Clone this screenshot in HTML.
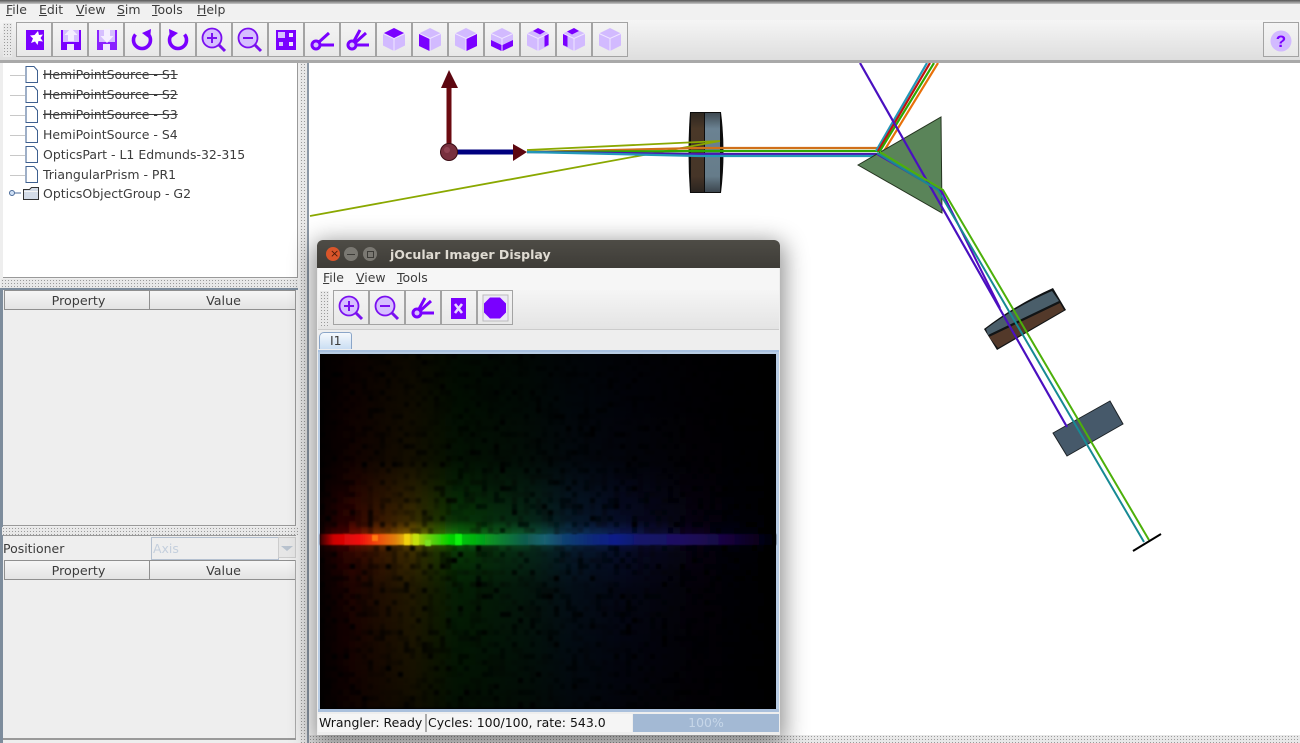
<!DOCTYPE html>
<html><head><meta charset="utf-8"><style>
html,body{margin:0;padding:0;background:#eee}
body{width:1300px;height:743px;overflow:hidden;position:relative;font-family:"DejaVu Sans",sans-serif;font-size:12.48px;color:#3c3c3c}
.a{position:absolute}
.t{position:absolute;white-space:nowrap;line-height:16px}
u{text-decoration:underline}
.btn{position:absolute;width:34px;height:33px;border:1px solid #a3a3a3;background:linear-gradient(#f4f4f4,#e8e8e8)}
.btn svg{position:absolute;left:0;top:0}
.dots{background-color:#e8e8e8;background-image:radial-gradient(#9a9a9a 0.55px,transparent 0.75px);background-size:3px 3px}
.hd{position:absolute;height:18px;border:1px solid #8f8f8f;background:linear-gradient(#f6f6f6,#e4e4e4);text-align:center;line-height:20px;box-sizing:content-box;font-size:12.7px}
.ln{position:absolute;left:10px;width:15px;height:1px;background:#c8c8c8}
.row{position:absolute;left:43px;white-space:nowrap;line-height:16px}
.s{text-decoration:line-through}
</style></head><body>
<svg width="0" height="0" style="position:absolute">
<defs>
<symbol id="zin" viewBox="0 0 34 33"><circle cx="15" cy="15" r="9.5" fill="#d6bfff" stroke="#7a10f0" stroke-width="1.8"/><path d="M22 22l6 6" stroke="#7a10f0" stroke-width="3"/><path d="M10 15h10M15 10v10" stroke="#7a10f0" stroke-width="2"/></symbol>
<symbol id="zout" viewBox="0 0 34 33"><circle cx="15" cy="15" r="9.5" fill="#d6bfff" stroke="#7a10f0" stroke-width="1.8"/><path d="M22 22l6 6" stroke="#7a10f0" stroke-width="3"/><path d="M10 15h10" stroke="#7a10f0" stroke-width="2"/></symbol>
<symbol id="fan" viewBox="0 0 34 33"><circle cx="11" cy="22" r="4" fill="#d6bfff" stroke="#7a00ff" stroke-width="3"/><path d="M14 19l10-9M15 22h14" stroke="#7a00ff" stroke-width="3" fill="none"/></symbol>
<symbol id="fan3" viewBox="0 0 34 33"><circle cx="11" cy="22" r="4" fill="#d6bfff" stroke="#7a00ff" stroke-width="3"/><path d="M13 18l6-11M15 19l10-9M15 22h13" stroke="#7a00ff" stroke-width="3" fill="none"/></symbol>
<symbol id="cube" viewBox="0 0 34 33"><path d="M17 5l11 5.500v12L17 28 6 22.500v-12z" fill="#d2baff"/><path d="M6 10.500l11 5 11-5M17 15.500V28" stroke="#efe6ff" stroke-width="1" fill="none"/></symbol>
</defs></svg>

<!-- top -->
<div class="a" style="left:0;top:0;width:1300px;height:4px;background:linear-gradient(#555,#c8c8c8)"></div>
<div class="a" style="left:0;top:4px;width:1300px;height:17px;background:#f1f1f1"></div>
<div class="t" style="left:6px;top:2px"><u>F</u>ile</div>
<div class="t" style="left:39px;top:2px"><u>E</u>dit</div>
<div class="t" style="left:76px;top:2px"><u>V</u>iew</div>
<div class="t" style="left:117px;top:2px"><u>S</u>im</div>
<div class="t" style="left:152px;top:2px"><u>T</u>ools</div>
<div class="t" style="left:197px;top:2px"><u>H</u>elp</div>
<div class="a" style="left:0;top:20px;width:1300px;height:40px;background:linear-gradient(#f5f5f5,#dedede)"></div>
<div class="a dots" style="left:3px;top:23px;width:9px;height:34px"></div>

<div class="btn" style="left:16px;top:22px"><svg width="34" height="33"><rect x="9" y="7" width="18" height="20" fill="#7a00ff"/><path d="M21 8l1 4 4-.5-2.500 3.500 2.500 3.500-4.500-.5-1 4-2.500-3.500-4 1.500 2-4.500-3-3 4.500-.5z" fill="#fff"/></svg></div>
<div class="btn" style="left:52px;top:22px"><svg width="34" height="33"><path d="M8 7h20v20H8z" fill="#7a00ff"/><rect x="10" y="7" width="16" height="12" fill="#d6bfff"/><rect x="14" y="21" width="7" height="6" fill="#efe6ff"/><path d="M18 5l6.500 7H21v6h-6v-6h-3.500z" fill="#f4eeff"/></svg></div>
<div class="btn" style="left:88px;top:22px"><svg width="34" height="33"><path d="M8 7h20v20H8z" fill="#8a20ff"/><rect x="10" y="7" width="16" height="12" fill="#d6bfff"/><rect x="14" y="21" width="7" height="6" fill="#efe6ff"/><path d="M18 20l6.500-7H21V6h-6v7h-3.500z" fill="#f4eeff"/></svg></div>
<div class="btn" style="left:124px;top:22px"><svg width="34" height="33"><path d="M10.500 11.500A8.500 8.500 0 1 0 23 11" fill="none" stroke="#7a00ff" stroke-width="3.600"/><path d="M17 10l9-4-1 10z" fill="#7a00ff"/></svg></div>
<div class="btn" style="left:160px;top:22px"><svg width="34" height="33"><path d="M23.500 11.500A8.500 8.500 0 1 1 11 11" fill="none" stroke="#7a00ff" stroke-width="3.600"/><path d="M17 10l-9-4 1 10z" fill="#7a00ff"/></svg></div>
<div class="btn" style="left:196px;top:22px"><svg width="34" height="33"><use href="#zin"/></svg></div>
<div class="btn" style="left:232px;top:22px"><svg width="34" height="33"><use href="#zout"/></svg></div>
<div class="btn" style="left:268px;top:22px"><svg width="34" height="33"><rect x="7" y="7" width="20" height="20" fill="#7a00ff"/><rect x="9" y="9" width="7" height="6" fill="#d6bfff"/><rect x="20" y="10" width="4" height="4" fill="#efe6ff"/><rect x="10" y="19" width="4" height="4" fill="#d6bfff"/><rect x="20" y="19" width="4" height="4" fill="#efe6ff"/></svg></div>
<div class="btn" style="left:304px;top:22px"><svg width="34" height="33"><use href="#fan"/></svg></div>
<div class="btn" style="left:340px;top:22px"><svg width="34" height="33"><use href="#fan3"/></svg></div>
<div class="btn" style="left:376px;top:22px"><svg width="34" height="33"><use href="#cube"/><path d="M17 5l10 5-10 5-10-5z" fill="#7a00ff"/></svg></div>
<div class="btn" style="left:412px;top:22px"><svg width="34" height="33"><use href="#cube"/><path d="M6 11l10.500 5v12L6 23z" fill="#7a00ff"/></svg></div>
<div class="btn" style="left:448px;top:22px"><svg width="34" height="33"><use href="#cube"/><path d="M28 11l-10.500 5v12L28 23z" fill="#7a00ff"/></svg></div>
<div class="btn" style="left:484px;top:22px"><svg width="34" height="33"><use href="#cube"/><path d="M6 17l10.500 5v6L6 23zM28 17l-10.500 5v6L28 23z" fill="#7a00ff"/></svg></div>
<div class="btn" style="left:520px;top:22px"><svg width="34" height="33"><use href="#cube"/><path d="M12 8l5-3 7 3.500-5 3zM23.500 13l4-2v11l-4 2z" fill="#7a00ff"/></svg></div>
<div class="btn" style="left:556px;top:22px"><svg width="34" height="33"><use href="#cube"/><path d="M22 8l-5-3-7 3.500 5 3zM6 11l4.500 2v11L6 22z" fill="#7a00ff"/></svg></div>
<div class="btn" style="left:592px;top:22px"><svg width="34" height="33"><use href="#cube"/></svg></div>
<div class="btn" style="left:1263px;top:22px"><svg width="34" height="33"><circle cx="17" cy="18" r="10.500" fill="#d2baff"/><text x="17" y="24" text-anchor="middle" font-family="Liberation Sans, sans-serif" font-weight="bold" font-size="17" fill="#7a00ff">?</text></svg></div>
<div class="a" style="left:0;top:60px;width:1300px;height:3px;background:#a9a9a9"></div>

<!-- left -->
<div class="a" style="left:0;top:288px;width:3px;height:455px;background:#7d8c9c"></div>
<div class="a" style="left:3px;top:63px;width:294px;height:214px;background:#fff;border-right:1px solid #999;border-bottom:1px solid #999"></div>
<div class="ln" style="top:75px"></div><div class="ln" style="top:95px"></div><div class="ln" style="top:115px"></div><div class="ln" style="top:135px"></div><div class="ln" style="top:155px"></div><div class="ln" style="top:175px"></div>
<svg class="a" style="left:0;top:63px" width="45" height="142">
<g fill="#fff" stroke="#3d5f8f" stroke-width="1"><path d="M26 3.500h8l3.500 4v12h-11.500z"/><path d="M26 23.500h8l3.500 4v12h-11.500z"/><path d="M26 43.500h8l3.500 4v12h-11.500z"/><path d="M26 63.500h8l3.500 4v12h-11.500z"/><path d="M26 83.500h8l3.500 4v12h-11.500z"/><path d="M26 103.500h8l3.500 4v12h-11.500z"/></g>
<circle cx="12" cy="130" r="2.500" fill="#cfe0f5" stroke="#4a6a99"/><path d="M15 130h6" stroke="#4a6a99"/>
<path d="M23.500 136.500h15v-12h-7l-2 2h-6z" fill="#d4dce8" stroke="#333" stroke-width="1"/><path d="M24 128.500h14" stroke="#f5f5f5"/>
</svg>
<div class="row s" style="top:67px">HemiPointSource - S1</div>
<div class="row s" style="top:87px">HemiPointSource - S2</div>
<div class="row s" style="top:107px">HemiPointSource - S3</div>
<div class="row" style="top:127px">HemiPointSource - S4</div>
<div class="row" style="top:147px">OpticsPart - L1 Edmunds-32-315</div>
<div class="row" style="top:167px">TriangularPrism - PR1</div>
<div class="row" style="top:186px">OpticsObjectGroup - G2</div>

<div class="a dots" style="left:1px;top:279px;width:297px;height:9px"></div>
<div class="a" style="left:0;top:288px;width:298px;height:2px;background:#7d8c9c"></div>
<div class="hd" style="left:4px;top:290px;width:144px;text-indent:3px">Property</div>
<div class="hd" style="left:149px;top:290px;width:145px;text-indent:2px">Value</div>
<div class="a" style="left:295px;top:290px;width:1px;height:235px;background:#999"></div>
<div class="a" style="left:3px;top:525px;width:293px;height:1px;background:#999"></div>
<div class="a dots" style="left:2px;top:527px;width:296px;height:8px"></div>
<div class="a" style="left:3px;top:535px;width:293px;height:1px;background:#999"></div>
<div class="t" style="left:3px;top:541px">Positioner</div>
<div class="a" style="left:151px;top:537px;width:126px;height:21px;border:1px solid #b4c0d0;background:#eee"></div>
<div class="t" style="left:153px;top:541px;color:#c4cfdd">Axis</div>
<div class="a" style="left:278px;top:537px;width:18px;height:21px;border:1px solid #ccc;box-sizing:border-box;background:#e6e6e6"></div>
<div class="a" style="left:281px;top:546px;width:0;height:0;border-left:6px solid transparent;border-right:6px solid transparent;border-top:5px solid #b8c2ce"></div>
<div class="hd" style="left:4px;top:560px;width:144px;text-indent:3px">Property</div>
<div class="hd" style="left:149px;top:560px;width:145px;text-indent:2px">Value</div>
<div class="a" style="left:295px;top:560px;width:1px;height:178px;background:#aaa"></div>
<div class="a" style="left:3px;top:738px;width:293px;height:2px;background:#999"></div>
<div class="a dots" style="left:300px;top:63px;width:7px;height:680px"></div>
<div class="a" style="left:307px;top:63px;width:2px;height:680px;background:#8b97a5"></div>

<!-- scene -->
<svg class="a" style="left:309px;top:63px" width="991" height="672" viewBox="309 63 991 672">
<defs>
<linearGradient id="lb" x1="0" x2="0" y1="0" y2="1"><stop offset="0" stop-color="#2e2720"/><stop offset=".2" stop-color="#4a3828"/><stop offset=".8" stop-color="#463528"/><stop offset="1" stop-color="#2a2420"/></linearGradient>
<linearGradient id="lg" x1="0" x2="0" y1="0" y2="1"><stop offset="0" stop-color="#3f4a52"/><stop offset=".2" stop-color="#6b8292"/><stop offset=".8" stop-color="#667c8a"/><stop offset="1" stop-color="#3c464e"/></linearGradient>
</defs>
<rect x="309" y="63" width="991" height="672" fill="#fff"/>
<path d="M690 112h31q5 40 0 81h-31q-3-40 0-81z" fill="#0d0d0d"/>
<rect x="691" y="113" width="13" height="79" fill="url(#lb)"/>
<rect x="705" y="113" width="15" height="79" fill="url(#lg)"/>
<path d="M310 216L720 141M527 150L720 141" stroke="#8aa800" stroke-width="1.800" fill="none"/>
<g fill="none" stroke-width="2.200">
<path d="M527 152L700 148L880 148" stroke="#d0701a"/>
<path d="M527 152L700 151L880 151" stroke="#2ea800"/>
<path d="M527 152L700 154L880 154" stroke="#4a18b0"/>
<path d="M527 152L700 156L880 156" stroke="#2398b8"/>
<path d="M876 151L927 63" stroke="#2398b8"/>
<path d="M878 151L930 63" stroke="#c01010"/>
<path d="M880 151L934 63" stroke="#2ea800"/>
<path d="M884 151L938 63" stroke="#e8700a"/>
</g>
<path d="M858 165L941 117L942 213Z" fill="#5a8459" stroke="#24331f" stroke-width="1"/>
<!-- lens 2 and block -->
<path d="M984 329Q1015 305 1053 288L1066 310L997 350Z" fill="#111416"/>
<path d="M986 329Q1015 307 1052 291L1059 301L988 335Z" fill="#4a5e6a"/>
<path d="M989 337L1060 303L1064 310L998 348Z" fill="#53392a"/>
<path d="M1053 433L1110 401L1123 424L1067 456Z" fill="#46596a" stroke="#1c2226" stroke-width="1"/>
<g fill="none">
<path d="M877 154L942 192L1000 308" stroke="#5408c0" stroke-width="2"/>
<path d="M860 63L1067 427" stroke="#4a10c0" stroke-width="2.200"/>
<path d="M877 153L938 190L1144 542" stroke="#178a94" stroke-width="2"/>
<path d="M880 152L943 190L1149 540" stroke="#4db00a" stroke-width="2"/>
</g>
<path d="M1133 551L1161 534" stroke="#000" stroke-width="2"/>
<path d="M449 152V88" stroke="#6b0a10" stroke-width="5"/>
<path d="M449 70L458 88H441Z" fill="#5d0710"/>
<path d="M449 152H515" stroke="#00007f" stroke-width="5"/>
<path d="M513 144L527 152L513 161Z" fill="#5d0710"/>
<circle cx="449" cy="152" r="8.500" fill="#78303e" stroke="#3a0c14"/>
<circle cx="447" cy="150" r="3" fill="#a05060" opacity=".6"/>
</svg>
<div class="a dots" style="left:309px;top:735px;width:991px;height:8px"></div>

<!-- window -->
<div class="a" style="left:317px;top:240px;width:463px;height:495px;background:#eee;border-radius:6px 6px 0 0;box-shadow:0 6px 24px 4px rgba(0,0,0,.45)"></div>
<div class="a" style="left:317px;top:240px;width:463px;height:28px;background:linear-gradient(#4e4c46,#3e3c37);border-radius:6px 6px 0 0"></div>
<div class="a" style="left:326px;top:247px;width:14px;height:14px;border-radius:50%;background:#d9552a"></div>
<div class="a" style="left:344px;top:247px;width:14px;height:14px;border-radius:50%;background:#7a7872"></div>
<div class="a" style="left:363px;top:247px;width:14px;height:14px;border-radius:50%;background:#7a7872"></div>
<div class="a" style="left:330px;top:245.500px;color:#4a1a08;font-size:11px;line-height:16px">×</div>
<div class="a" style="left:347px;top:253.500px;width:8px;height:1px;background:#3c3b37"></div>
<div class="a" style="left:367px;top:251px;width:5px;height:5px;border:1px solid #3c3b37"></div>
<div class="t" style="left:390px;top:247px;color:#dfdbd2;font-weight:bold;font-size:12.55px">jOcular Imager Display</div>
<div class="a" style="left:318px;top:268px;width:461px;height:22px;background:#f6f6f6"></div>
<div class="t" style="left:323px;top:270px"><u>F</u>ile</div>
<div class="t" style="left:356px;top:270px"><u>V</u>iew</div>
<div class="t" style="left:397px;top:270px"><u>T</u>ools</div>
<div class="a" style="left:318px;top:290px;width:461px;height:39px;background:linear-gradient(#f5f5f5,#e4e4e4);border-bottom:1px solid #ccc"></div>
<div class="a dots" style="left:320px;top:291px;width:9px;height:35px"></div>
<div class="btn" style="left:333px;top:290px"><svg width="34" height="33"><use href="#zin"/></svg></div>
<div class="btn" style="left:369px;top:290px"><svg width="34" height="33"><use href="#zout"/></svg></div>
<div class="btn" style="left:405px;top:290px"><svg width="34" height="33"><use href="#fan3"/></svg></div>
<div class="btn" style="left:441px;top:290px"><svg width="34" height="33"><rect x="9" y="7" width="15" height="21" fill="#7a00ff"/><path d="M13 13l7 9M20 13l-7 9" stroke="#e6d8ff" stroke-width="2.600"/></svg></div>
<div class="btn" style="left:477px;top:290px"><svg width="34" height="33"><rect x="5" y="4" width="25" height="26" fill="#ece8f5" stroke="#bbb"/><path d="M12 6.500h10l6 6v9l-6 6H12l-6-6v-9z" fill="#7a00ff"/></svg></div>
<div class="a" style="left:319px;top:332px;width:31px;height:17px;border:1px solid #8aa5c8;border-bottom:0;border-radius:5px 3px 0 0;background:linear-gradient(#f5f9fd,#c7dcf2)"></div>
<div class="t" style="left:330px;top:333px">I1</div>
<svg class="a" style="left:318px;top:349px" width="461" height="363" viewBox="318 349 461 363">
<defs>
<linearGradient id="sp" gradientUnits="userSpaceOnUse" x1="320" x2="776" y1="0" y2="0">
<stop offset="0" stop-color="#300"/><stop offset=".03" stop-color="#c00"/><stop offset=".088" stop-color="#ee1010"/><stop offset=".12" stop-color="#f04010"/><stop offset=".165" stop-color="#e08010"/><stop offset=".186" stop-color="#e0b010"/><stop offset=".208" stop-color="#c0d010"/><stop offset=".237" stop-color="#70d010"/><stop offset=".285" stop-color="#00d000"/><stop offset=".34" stop-color="#00b010"/><stop offset=".395" stop-color="#108030"/><stop offset=".45" stop-color="#105a4c"/><stop offset=".493" stop-color="#1a6070"/><stop offset=".537" stop-color="#103f70"/><stop offset=".592" stop-color="#0a2a78"/><stop offset=".647" stop-color="#0a1c88"/><stop offset=".702" stop-color="#141868"/><stop offset=".79" stop-color="#1c0e60"/><stop offset=".877" stop-color="#180644"/><stop offset=".965" stop-color="#060218"/><stop offset="1" stop-color="#000"/>
</linearGradient>
<linearGradient id="v" x1="0" x2="0" y1="0" y2="1"><stop offset="0" stop-color="#fff" stop-opacity=".08"/><stop offset=".3" stop-color="#fff" stop-opacity=".14"/><stop offset=".47" stop-color="#fff" stop-opacity=".42"/><stop offset=".51" stop-color="#fff" stop-opacity=".95"/><stop offset=".56" stop-color="#fff" stop-opacity=".42"/><stop offset=".66" stop-color="#fff" stop-opacity=".24"/><stop offset="1" stop-color="#fff" stop-opacity=".12"/></linearGradient>
<mask id="m" maskUnits="userSpaceOnUse" x="320" y="354" width="456" height="355"><rect x="320" y="354" width="456" height="355" fill="url(#v)"/></mask>
<filter id="n" filterUnits="userSpaceOnUse" x="320" y="354" width="456" height="355"><feTurbulence type="fractalNoise" baseFrequency=".22" numOctaves="2" seed="4" result="t"/><feColorMatrix in="t" type="matrix" values="0 0 0 0 0 0 0 0 0 0 0 0 0 0 0 3 0 0 0 -.7" result="a"/><feComposite in="SourceGraphic" in2="a" operator="in"/></filter>
<filter id="pix" filterUnits="userSpaceOnUse" x="320" y="354" width="456" height="355"><feFlood x="322" y="356" width="1" height="1" flood-color="#000"/><feComposite x="320" y="354" width="6" height="6"/><feTile x="320" y="354" width="456" height="355" result="a"/><feComposite x="320" y="354" width="456" height="355" in="SourceGraphic" in2="a" operator="in"/><feMorphology x="320" y="354" width="456" height="355" operator="dilate" radius="3"/><feGaussianBlur x="320" y="354" width="456" height="355" stdDeviation="1"/></filter>
<filter id="bl" x="-5%" y="-50%" width="110%" height="200%"><feGaussianBlur stdDeviation="0.8"/></filter>
<linearGradient id="glow" gradientUnits="userSpaceOnUse" x1="320" x2="776" y1="0" y2="0"><stop offset="0" stop-color="#100"/><stop offset=".07" stop-color="#7a0800"/><stop offset=".2" stop-color="#8a6600"/><stop offset=".3" stop-color="#0c7c08"/><stop offset=".45" stop-color="#0a5c30"/><stop offset=".55" stop-color="#0a3a60"/><stop offset=".66" stop-color="#0a1a58"/><stop offset=".8" stop-color="#0a0628"/><stop offset="1" stop-color="#000"/></linearGradient>
</defs>
<rect x="318" y="349" width="461" height="363" fill="#eee"/>
<rect x="318" y="350" width="461" height="2" fill="#a9c1e0"/>
<rect x="318" y="352" width="461" height="360" fill="#b8cce4"/>
<rect x="320" y="354" width="456" height="355" fill="#000"/>
<g mask="url(#m)"><g filter="url(#pix)"><rect x="320" y="354" width="456" height="355" fill="url(#glow)" filter="url(#n)"/></g></g>
<rect x="320" y="534" width="456" height="11" fill="url(#sp)" filter="url(#bl)"/>
<rect x="372" y="535" width="6" height="6" fill="#ff7a10" filter="url(#bl)"/>
<rect x="404" y="534" width="6" height="11" fill="#f0d010" filter="url(#bl)"/>
<rect x="413" y="534" width="6" height="11" fill="#c4e010" filter="url(#bl)"/>
<rect x="425" y="540" width="6" height="6" fill="#7ae020" filter="url(#bl)"/>
<rect x="455" y="534" width="7" height="11" fill="#10f010" filter="url(#bl)"/>
</svg>
<div class="a" style="left:318px;top:709px;width:461px;height:3px;background:#aac0dc"></div>
<div class="a" style="left:318px;top:714px;width:107px;height:18px;background:#f5f5f5;border-right:1px solid #aaa"></div>
<div class="t" style="left:319px;top:715px;color:#111">Wrangler: Ready</div>
<div class="a" style="left:426px;top:714px;width:205px;height:18px;background:#f5f5f5;border-left:1px solid #aaa"></div>
<div class="t" style="left:428px;top:715px;color:#111">Cycles: 100/100, rate: 543.0</div>
<div class="a" style="left:633px;top:714px;width:146px;height:18px;background:#a3b9d4;text-align:center;line-height:18px;color:#c6d6e8">100%</div>
</body></html>
